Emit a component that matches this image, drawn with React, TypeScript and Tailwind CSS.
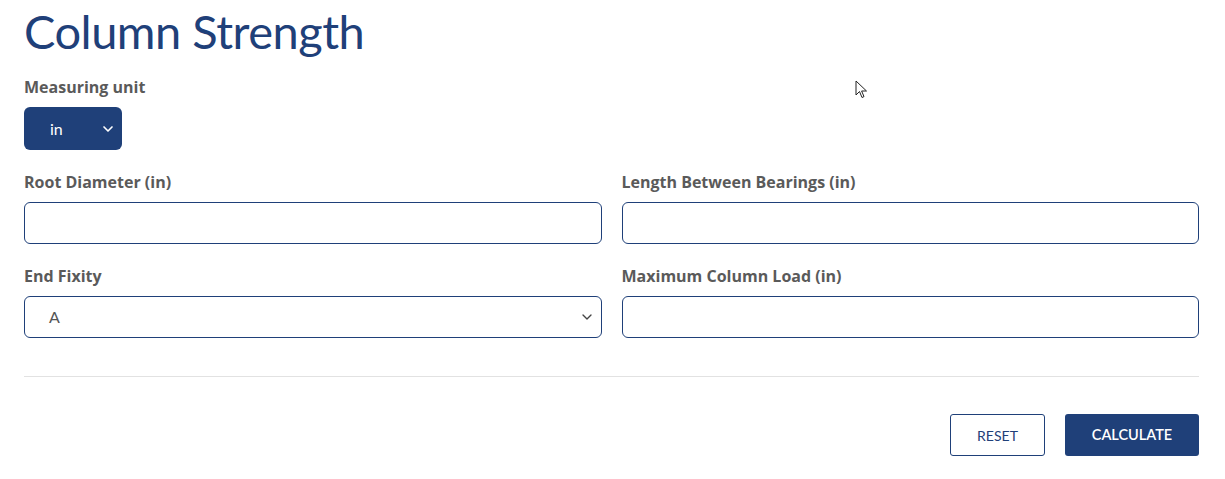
import { ChevronDown } from "lucide-react";

const labelCls =
  "block font-['Open_Sans',Arial,sans-serif] text-[16px] font-bold text-[#5a5a5a] leading-[20px]";
const inputCls =
  "block w-full h-[42px] rounded-[6px] border border-[#1f4079] bg-white px-3 text-[15px] text-[#555] outline-none";

function Field({ label, children }: { label: string; children: React.ReactNode }) {
  return (
    <div>
      <label className={labelCls}>{label}</label>
      <div className="mt-[10px]">{children}</div>
    </div>
  );
}

export default function App() {
  return (
    <div
      className="relative min-h-[479px] bg-white pl-6 pr-[26px]"
      style={{ fontFamily: "Lato, 'Open Sans', Arial, sans-serif" }}
    >
      <h1 className="pt-[3px] text-[47px] leading-[56px] font-normal text-[#1f4079] tracking-[-0.5px]">
        Column Strength
      </h1>

      <div className="mt-[18px]">
        <label className={labelCls}>Measuring unit</label>
        <div className="mt-[10px] flex h-[43px] w-[98px] items-center justify-between rounded-[6px] bg-[#1f4079] pl-[26px] pr-[6px] text-[16px] text-white">
          <span>in</span>
          <ChevronDown size={16} strokeWidth={2.5} />
        </div>
      </div>

      <div className="mt-[22px] grid grid-cols-2 gap-x-5 gap-y-[22px]">
        <Field label="Root Diameter (in)">
          <input className={inputCls} />
        </Field>
        <Field label="Length Between Bearings (in)">
          <input className={inputCls} />
        </Field>
        <Field label="End Fixity">
          <div className={inputCls + " flex items-center justify-between pl-6 pr-[6px]"}>
            <span className="text-[16px] text-[#555]">A</span>
            <ChevronDown size={16} strokeWidth={2} className="text-[#444]" />
          </div>
        </Field>
        <Field label="Maximum Column Load (in)">
          <input className={inputCls} />
        </Field>
      </div>

      <div className="mt-[38px] border-t border-[#e2e2e2]" />

      <div className="mt-[37px] flex justify-end gap-5">
        <button className="h-[42px] w-[95px] rounded-[3px] border border-[#1f4079] bg-white text-[14px] text-[#1f4079]">
          RESET
        </button>
        <button className="h-[42px] w-[134px] rounded-[3px] bg-[#1f4079] text-[14.5px] font-semibold text-white">
          CALCULATE
        </button>
      </div>

      <svg
        className="absolute left-[855px] top-[80px]"
        width="13"
        height="20"
        viewBox="0 0 13 20"
      >
        <path
          d="M1 1 L1 15 L4.5 11.5 L7 17.5 L9 16.6 L6.6 11 L11.5 11 Z"
          fill="white"
          stroke="#222"
          strokeWidth="1"
          strokeLinejoin="round"
        />
      </svg>
    </div>
  );
}
